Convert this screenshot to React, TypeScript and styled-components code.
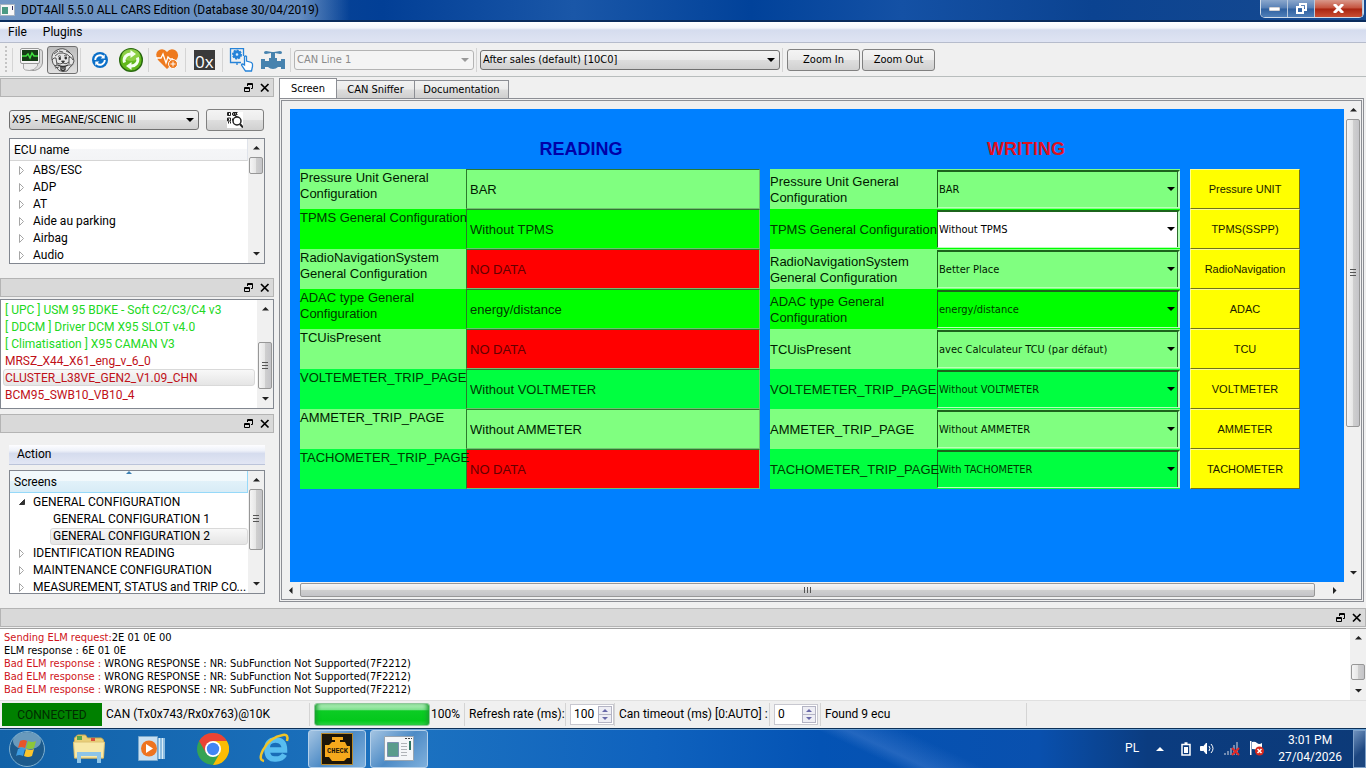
import type { ReactNode } from 'react'
import styled, { createGlobalStyle, css } from 'styled-components'

const uiFont = 'Roboto, "Noto Sans", sans-serif'
const smallFont = '"DejaVu Sans Condensed", "DejaVu Sans", sans-serif'
const formFont = '"Liberation Sans", Arial, sans-serif'

const GlobalStyle = createGlobalStyle`
  *, *::before, *::after {
    box-sizing: border-box;
  }

  body {
    margin: 0;
    background: #fff;
    color: #000;
    font: 12px/17px ${uiFont};
  }

  button, input, select {
    margin: 0;
    padding: 0;
    color: inherit;
    font: inherit;
  }

  ul {
    margin: 0;
    padding: 0;
    list-style: none;
  }

  svg {
    display: block;
    flex: none;
  }
`

const Desktop = styled.div`
  display: flex;
  flex-direction: column;
  min-height: 100vh;
  margin-right: 2px;
  background: #f0f0f0;
`

/* ---------- window frame ---------- */

const TitleBar = styled.header`
  display: flex;
  align-items: center;
  height: 22px;
  border-bottom: 2px solid #0a2c5c;
  background:
    linear-gradient(90deg, rgba(150, 180, 215, 0.7), rgba(150, 180, 215, 0.65) 300px, transparent 350px),
    linear-gradient(90deg, #1c5398, #023f96 28%, #1a57a8 42%, #01429a 55%, #1451a5 66%, #0b4391 80%, #174a90);
`

const WindowTitle = styled.h1`
  flex: 1;
  margin: 0 0 0 6px;
  font-size: 12px;
  font-weight: 400;
`

const WindowControls = styled.div`
  display: flex;
  align-self: flex-start;
  height: 18px;
  margin-right: 2px;
  overflow: hidden;
  border: 1px solid #cfdbe9;
  border-top: 0;
  border-radius: 0 0 5px 5px;
`

const WindowButton = styled.button<{ $close?: boolean }>`
  display: grid;
  place-items: center;
  width: ${({ $close }) => ($close ? 48 : 27)}px;
  border: 0;
  border-right: 1px solid #b9c9dd;
  background: ${({ $close }) =>
    $close
      ? 'linear-gradient(#d9988a, #c4513c 48%, #a82410 52%, #c94e33)'
      : 'linear-gradient(#8ba7cc, #557eb4 48%, #2e5f9f 52%, #4f7fb9)'};
`

const MenuBar = styled.nav`
  display: flex;
  gap: 16px;
  height: 21px;
  padding: 1px 8px 0;
  border-bottom: 1px solid #b6bccc;
  background: linear-gradient(#fff, #f4f6fb 30%, #d5dcee 40%, #dfe4f3);
`

const MenuItem = styled.button`
  border: 0;
  background: none;
`

const Toolbar = styled.div`
  display: flex;
  align-items: center;
  height: 34px;
  padding-left: 5px;
  border-bottom: 1px solid #b8bdbd;
`

const Grip = styled.div`
  width: 2px;
  height: 28px;
  margin-right: 3px;
  background: repeating-linear-gradient(#c4c4c4 0 2px, transparent 2px 4px);
`

const Separator = styled.div`
  width: 1px;
  height: 24px;
  margin: 0 3px 0 2px;
  background: #d4d4d4;
`

const ToolButton = styled.button<{ $pressed?: boolean }>`
  display: grid;
  place-items: center;
  width: 31px;
  height: 28px;
  border: 1px solid transparent;
  border-radius: 3px;
  background: none;
  ${({ $pressed }) =>
    $pressed &&
    css`
      border-color: #707070;
      background: linear-gradient(#bcbcbc, #e0e0e0);
    `}
`

const PushButton = styled.button<{ $width: number }>`
  display: grid;
  place-items: center;
  width: ${({ $width }) => $width}px;
  height: 22px;
  border: 1px solid #808080;
  border-radius: 3px;
  background: linear-gradient(#f4f4f4, #ececec 48%, #dedede 52%, #d0d0d0);
  font: 11px/16px ${smallFont};
`

const ZoomButtons = styled.div`
  display: flex;
  gap: 2px;
  margin-left: 1px;
`

/* ---------- combo boxes ---------- */

const ComboFrame = styled.div<{ $width: number }>`
  display: grid;
  align-items: center;
  width: ${({ $width }) => $width}px;

  > * {
    grid-area: 1 / 1;
  }

  > svg {
    justify-self: end;
    margin-right: 5px;
    pointer-events: none;
  }
`

const ComboSelect = styled.select`
  appearance: none;
  width: 100%;
  height: 20px;
  padding: 0 2px;
  border: 1px solid #707070;
  border-radius: 3px;
  background: linear-gradient(#f3f3f3, #ebebeb 48%, #dddddd 52%, #cfcfcf);
  font: 11px/16px ${smallFont};

  &:disabled {
    border-color: #b4b4b4;
    background: #f4f4f4;
    color: #8a8a8a;
    opacity: 1;
  }
`

/* ---------- workspace ---------- */

const Workspace = styled.main`
  display: flex;
  flex: 1;
  gap: 5px;
  padding: 1px 2px 6px 0;
`

const Sidebar = styled.aside`
  display: flex;
  flex-direction: column;
  width: 274px;
`

const DockTitle = styled.div`
  display: flex;
  align-items: center;
  justify-content: flex-end;
  gap: 6px;
  height: 19px;
  padding-right: 3px;
  border: 1px solid #b4b4b4;
  background: #d9d9d9;
`

const DockButton = styled.button`
  display: grid;
  place-items: center;
  width: 10px;
  height: 12px;
  border: 0;
  background: none;
`

const DockBody = styled.div<{ $last?: boolean }>`
  padding: 12px 9px ${({ $last }) => ($last ? 0 : 14)}px;
`

const ProjectRow = styled.div`
  display: flex;
  align-items: center;
  gap: 7px;
  margin-bottom: 7px;
`

const ListFrame = styled.div<{ $height: number }>`
  display: flex;
  height: ${({ $height }) => $height}px;
  overflow: hidden;
  border: 1px solid #828790;
  background: #fff;
`

const EcuFrame = styled(ListFrame)`
  margin: 2px 0 5px;
`

const ListContent = styled.div`
  flex: 1;
  min-width: 0;
`

const ListHeader = styled.div<{ $sorted?: boolean }>`
  display: flex;
  flex-direction: column;
  justify-content: flex-end;
  height: 22px;
  margin-bottom: 1px;
  padding: 0 4px 1px;
  border-right: 1px solid #dfe3ea;
  border-bottom: 1px solid #d5d5d5;
  background: linear-gradient(#fff 45%, #f5f6f8 50%, #f3f4f6);
  ${({ $sorted }) =>
    $sorted &&
    css`
      border-color: #96d9f9;
      background: linear-gradient(#f2f9fc 45%, #e1f1f9 50%, #d8ecf6);

      > svg {
        align-self: center;
      }
    `}
`

const TreeItem = styled.li<{ $level?: number; $selected?: boolean }>`
  display: flex;
  align-items: center;
  height: 17px;
  margin-left: ${({ $level = 0 }) => ($level ? 40 : 0)}px;
  padding-left: ${({ $level = 0 }) => ($level ? 2 : 7)}px;
  gap: 7px;
  border: 1px solid ${({ $selected }) => ($selected ? '#d9d9d9' : 'transparent')};
  border-radius: 3px;
  background: ${({ $selected }) => ($selected ? 'linear-gradient(#f8f8f8, #e5e5e5)' : 'none')};
  line-height: 17px;
  white-space: nowrap;
`

const EcuList = styled.ul`
  flex: 1;
  padding: 1px 2px;
`

const EcuItem = styled.li<{ $ok?: boolean; $selected?: boolean }>`
  height: 17px;
  padding-left: 1px;
  border: 1px solid ${({ $selected }) => ($selected ? '#d9d9d9' : 'transparent')};
  border-radius: 3px;
  background: ${({ $selected }) => ($selected ? 'linear-gradient(#f8f8f8, #e5e5e5)' : 'none')};
  color: ${({ $ok }) => ($ok ? '#22d822' : '#c01018')};
  line-height: 17px;
  white-space: nowrap;
`

const ActionBar = styled.div`
  height: 20px;
  margin-bottom: 5px;
  padding: 1px 0 0 8px;
  border-bottom: 1px solid #bcc4da;
  background: linear-gradient(#fdfdff, #eef1f9 30%, #d5dcee 45%, #e2e6f4);
`

/* ---------- scroll bars ---------- */

const ScrollTrack = styled.div<{ $horizontal?: boolean }>`
  display: flex;
  flex: none;
  flex-direction: ${({ $horizontal }) => ($horizontal ? 'row' : 'column')};
  align-items: center;
  ${({ $horizontal }) => ($horizontal ? 'height' : 'width')}: 16px;
  background: #f0f0f0;
`

const ScrollArrow = styled.button<{ $horizontal?: boolean }>`
  display: grid;
  flex: none;
  place-items: center;
  width: ${({ $horizontal }) => ($horizontal ? 18 : 16)}px;
  height: ${({ $horizontal }) => ($horizontal ? 16 : 18)}px;
  border: 0;
  background: none;
`

const ScrollSpace = styled.div<{ $grow: number }>`
  flex: ${({ $grow }) => $grow} 1 0;
`

const ScrollThumb = styled.div<{ $grow: number; $horizontal?: boolean }>`
  display: grid;
  flex: ${({ $grow }) => $grow} 1 0;
  place-items: center;
  align-self: stretch;
  margin: ${({ $horizontal }) => ($horizontal ? '1px 0' : '0 1px')};
  border: 1px solid #979797;
  border-radius: 2px;
  background: linear-gradient(${({ $horizontal }) => ($horizontal ? '180deg' : '90deg')}, #f5f5f5, #e6e6e6 48%, #cfcfcf 52%, #c4c4c8);
`

const HorizontalBar = styled.div`
  display: grid;
  padding: 0 17px 1px 0;
`

/* ---------- tabs and form canvas ---------- */

const TabArea = styled.section`
  display: flex;
  flex: 1;
  flex-direction: column;
  min-width: 0;
`

const TabStrip = styled.div`
  display: flex;
  align-items: flex-end;
  height: 20px;
`

const Tab = styled.button<{ $active?: boolean; $width: number }>`
  width: ${({ $width }) => $width}px;
  height: ${({ $active }) => ($active ? 20 : 18)}px;
  border: 1px solid #8c8e94;
  border-bottom: 0;
  background: ${({ $active }) => ($active ? '#fff' : 'linear-gradient(#f2f2f2, #ebebeb 48%, #dddddd 52%, #cfcfcf)')};
  font: 11px/16px ${smallFont};

  & + & {
    border-left: 0;
  }
`

const TabPane = styled.div`
  display: flex;
  flex: 1;
  flex-direction: column;
  border: 3px double #8c8e94;
`

const PaneRow = styled.div`
  display: flex;
  flex: 1;
  min-height: 0;
`

const Viewport = styled.div`
  flex: 1;
  min-width: 0;
  padding: 8px 1px 0 8px;
  overflow: hidden;
`

const Canvas = styled.form`
  display: grid;
  grid-template-columns: 460px 410px 110px;
  grid-template-rows: 40px auto;
  column-gap: 10px;
  align-content: start;
  height: 100%;
  padding: 20px 0 0 10px;
  background: #0080ff;
  font: 13px/16px ${formFont};
`

const Heading = styled.h2<{ $color: string }>`
  margin: 0;
  padding-left: 102px;
  color: ${({ $color }) => $color};
  font-size: 18px;
  font-weight: 700;
  line-height: 40px;
  text-align: center;
`

const HeadingSpacer = styled.div``

const FieldRow = styled.div<{ $shade: string }>`
  display: flex;
  height: 40px;
  background: ${({ $shade }) => $shade};
  color: ${({ $shade }) => ($shade === '#80ff80' ? '#001a00' : '#003800')};
`

const FieldLabel = styled.label<{ $middle?: boolean }>`
  z-index: 1;
  display: flex;
  align-items: ${({ $middle }) => ($middle ? 'center' : 'flex-start')};
  width: ${({ $middle }) => ($middle ? 167 : 166)}px;
  padding-top: ${({ $middle }) => ($middle ? 2 : 1)}px;
  white-space: pre;
`

const FieldValue = styled.input<{ $missing: boolean }>`
  flex: 1;
  min-width: 0;
  padding: 1px 3px 0;
  border: 1px solid;
  border-color: #2c7a2c #70c070 #70c070 #2c7a2c;
  background: ${({ $missing }) => ($missing ? '#f00' : 'transparent')};
  color: ${({ $missing }) => ($missing ? '#640000' : 'inherit')};
`

const FormSelect = styled.select<{ $blank?: boolean }>`
  appearance: none;
  width: 100%;
  height: 38px;
  padding: 0 1px;
  border: solid;
  border-width: 2px 2px 1px 1px;
  border-color: #1c641c #b8ffb8 #b8ffb8 #1c641c;
  border-radius: 0;
  background: ${({ $blank }) => ($blank ? '#fff' : 'transparent')};
  box-shadow: inset -1px 0 #2c6c2c;
  color: ${({ $blank }) => ($blank ? '#000' : 'inherit')};
  font: 11px/16px ${smallFont};
`

const SendButton = styled.button`
  height: 40px;
  border: 1px solid;
  border-color: #ffff90 #70701a #70701a #ffff90;
  background: #ff0;
  color: #1a1a00;
  font: 11px/16px ${formFont};
`

const ButtonColumn = styled.div`
  display: grid;
`

/* ---------- log, status bar ---------- */

const LogFrame = styled.div`
  display: flex;
  height: 72px;
  margin-top: 1px;
  border-top: 1px solid #a0a0a0;
  background: #fff;
`

const LogText = styled.div`
  flex: 1;
  padding: 2px 4px;
  font: 11px/13px ${smallFont};
`

const LogTag = styled.span`
  color: #d01420;
`

const StatusBar = styled.footer`
  display: flex;
  align-items: center;
  height: 28px;
  padding-left: 2px;
  border-top: 1px solid #e0e0e0;
`

const Connected = styled.div`
  width: 100px;
  height: 23px;
  background: #008000;
  color: #002c00;
  line-height: 24px;
  text-align: center;
`

const StatusItem = styled.div<{ $width: number }>`
  display: flex;
  align-items: center;
  width: ${({ $width }) => $width}px;
  height: 23px;
  padding-left: 4px;
  border-right: 1px solid #d4d4d4;
  white-space: nowrap;
`

const Progress = styled.div`
  width: 116px;
  height: 23px;
  margin-right: 1px;
  border: 1px solid #8fc79a;
  border-radius: 3px;
  background: linear-gradient(#b8f0c0, #7ce08c 28%, #0ccc24 32%, #04c81c 80%, #30d848);
  box-shadow: inset 4px 0 4px -2px #1a9c30, inset -4px 0 4px -2px #1a9c30;
`

const SpinBox = styled.div`
  display: flex;
  align-items: center;
  width: 44px;
  height: 21px;
  padding: 1px;
  border: 1px solid #c8c8d0;
  background: #fff;
`

const SpinInput = styled.input`
  appearance: textfield;
  flex: 1;
  min-width: 0;
  padding-left: 2px;
  border: 0;
  background: none;

  &::-webkit-inner-spin-button {
    appearance: none;
  }
`

const SpinArrows = styled.div`
  display: grid;
  width: 14px;
  border: 1px solid #b4b4c4;
`

const SpinArrow = styled.button`
  display: grid;
  place-items: center;
  height: 7px;
  border: 0;
  background: #eeeef4;

  & + & {
    border-top: 1px solid #b4b4c4;
    height: 8px;
  }
`

/* ---------- taskbar ---------- */

const Taskbar = styled.footer`
  display: flex;
  align-items: center;
  height: 40px;
  padding-left: 8px;
  border-top: 1px solid #0c3158;
  box-shadow: inset 0 1px #6ba2d6;
  background:
    linear-gradient(25deg, transparent 62%, rgba(90, 140, 215, 0.35) 64%, transparent 68%),
    linear-gradient(90deg, #1262a8, #1c72c0 30%, #0f62be 48%, #0453b4 60%, #0950ae 76%, #0b3c80 84%, #0c3a78);
`

const TaskButton = styled.button<{ $open?: boolean }>`
  display: grid;
  place-items: center;
  width: ${({ $open }) => ($open ? 58 : 62)}px;
  height: 38px;
  border: 1px solid transparent;
  border-radius: 3px;
  background: none;
  ${({ $open }) =>
    $open &&
    css`
      margin-left: 4px;
      border-color: #b4d0ea;
      background: linear-gradient(135deg, #a4c4e2, #4d8bc6 50%, #7fb0dc);
    `}
`

const StartButton = styled.button`
  width: 38px;
  height: 38px;
  margin-right: 12px;
  border: 0;
  background: none;
`

const TaskGroup = styled.div`
  display: flex;
  margin-left: -2px;
`

const Tray = styled.div`
  display: flex;
  align-items: center;
  gap: 9px;
  margin-left: auto;
  color: #fff;
`

const TrayMore = styled.button`
  display: grid;
  place-items: center;
  width: 24px;
  height: 24px;
  border: 0;
  background: none;
`

const Clock = styled.time`
  margin: 0 2px 0 4px;
  text-align: center;
`

const ShowDesktop = styled.button`
  width: 13px;
  height: 38px;
  border: 1px solid #7ea0c8;
  background: linear-gradient(135deg, #6e90bc, #1c4680 60%);
`

/* ---------- data ---------- */

const ecuNames = ['ABS/ESC', 'ADP', 'AT', 'Aide au parking', 'Airbag', 'Audio']

const foundEcus = [
  { name: '[ UPC ] USM 95 BDKE - Soft C2/C3/C4 v3', ok: true },
  { name: '[ DDCM ] Driver DCM X95 SLOT v4.0', ok: true },
  { name: '[ Climatisation ] X95 CAMAN V3', ok: true },
  { name: 'MRSZ_X44_X61_eng_v_6_0' },
  { name: 'CLUSTER_L38VE_GEN2_V1.09_CHN', selected: true },
  { name: 'BCM95_SWB10_VB10_4' },
]

const fields = [
  { label: 'Pressure Unit General\nConfiguration', shade: '#80ff80', read: 'BAR', write: 'BAR', send: 'Pressure UNIT' },
  { label: 'TPMS General Configuration', shade: '#00ff00', read: 'Without TPMS', write: 'Without TPMS', send: 'TPMS(SSPP)', blank: true },
  { label: 'RadioNavigationSystem\nGeneral Configuration', shade: '#80ff80', read: 'NO DATA', write: 'Better Place', send: 'RadioNavigation' },
  { label: 'ADAC type General\nConfiguration', shade: '#00ff00', read: 'energy/distance', write: 'energy/distance', send: 'ADAC' },
  { label: 'TCUisPresent', shade: '#80ff80', read: 'NO DATA', write: 'avec Calculateur TCU (par défaut)', send: 'TCU' },
  { label: 'VOLTEMETER_TRIP_PAGE', shade: '#00ff40', read: 'Without VOLTMETER', write: 'Without VOLTMETER', send: 'VOLTMETER' },
  { label: 'AMMETER_TRIP_PAGE', shade: '#80ff80', read: 'Without AMMETER', write: 'Without AMMETER', send: 'AMMETER' },
  { label: 'TACHOMETER_TRIP_PAGE', shade: '#00ff40', read: 'NO DATA', write: 'With TACHOMETER', send: 'TACHOMETER' },
]

const log = [
  { tag: 'Sending ELM request:', text: '2E 01 0E 00' },
  { tag: '', text: 'ELM response : 6E 01 0E' },
  { tag: 'Bad ELM response : ', text: 'WRONG RESPONSE : NR: SubFunction Not Supported(7F2212)' },
  { tag: 'Bad ELM response : ', text: 'WRONG RESPONSE : NR: SubFunction Not Supported(7F2212)' },
  { tag: 'Bad ELM response : ', text: 'WRONG RESPONSE : NR: SubFunction Not Supported(7F2212)' },
]

/* ---------- small parts ---------- */

const arrowPaths = {
  up: 'M0 4 L4 0 L8 4Z',
  down: 'M0 0 H8 L4 4Z',
  left: 'M4 0 V8 L0 4Z',
  right: 'M0 0 L4 4 L0 8Z',
}

const Arrow = ({ dir, color = '#222', size = 8 }: { dir: keyof typeof arrowPaths; color?: string; size?: number }) => {
  const flat = dir === 'up' || dir === 'down'
  return (
    <svg
      width={flat ? size : size / 2}
      height={flat ? size / 2 : size}
      viewBox={flat ? '0 0 8 4' : '0 0 4 8'}
      fill={color}
    >
      <path d={arrowPaths[dir]} />
    </svg>
  )
}

interface ScrollBarProps {
  before: number
  thumb: number
  after: number
  horizontal?: boolean
  grip?: boolean
}

const ScrollBar = ({ before, thumb, after, horizontal, grip }: ScrollBarProps) => (
  <ScrollTrack $horizontal={horizontal}>
    <ScrollArrow type="button" $horizontal={horizontal} aria-label="Scroll back">
      <Arrow dir={horizontal ? 'left' : 'up'} size={7} />
    </ScrollArrow>
    <ScrollSpace $grow={before} />
    <ScrollThumb $grow={thumb} $horizontal={horizontal}>
      {grip && (
        <svg width="8" height="8" stroke="#555">
          <path d={horizontal ? 'M.5 1v6M3.5 1v6M6.5 1v6' : 'M1 .5h6M1 3.5h6M1 6.5h6'} />
        </svg>
      )}
    </ScrollThumb>
    <ScrollSpace $grow={after} />
    <ScrollArrow type="button" $horizontal={horizontal} aria-label="Scroll forward">
      <Arrow dir={horizontal ? 'right' : 'down'} size={7} />
    </ScrollArrow>
  </ScrollTrack>
)

const Combo = ({ label, value, width, disabled }: { label: string; value: string; width: number; disabled?: boolean }) => (
  <ComboFrame $width={width}>
    <ComboSelect aria-label={label} disabled={disabled}>
      <option>{value}</option>
    </ComboSelect>
    <Arrow dir="down" color={disabled ? '#999' : '#000'} />
  </ComboFrame>
)

const DockHeader = () => (
  <DockTitle>
    <DockButton aria-label="Float">
      <svg width="10" height="10" fill="none" stroke="#000">
        <path d="M3.5 3V.5h5v5H7M3 1.5h6" />
        <path d="M.5 4.5h5v4h-5zM0 5.5h6" />
      </svg>
    </DockButton>
    <DockButton aria-label="Close">
      <svg width="10" height="10" stroke="#000" strokeWidth="1.700">
        <path d="M1 1l7.500 7.500M8.500 1L1 8.500" />
      </svg>
    </DockButton>
  </DockTitle>
)

const TreeMark = ({ open }: { open?: boolean }) => (
  <svg width="8" height="9" fill={open ? '#333' : '#fff'} stroke={open ? '#333' : '#a6a6a6'}>
    <path d={open ? 'M6.5 1.5v5h-5z' : 'M1.5 .5v8l4-4z'} />
  </svg>
)

const TreeRow = ({ children, open }: { children: ReactNode; open?: boolean }) => (
  <TreeItem>
    <TreeMark open={open} />
    {children}
  </TreeItem>
)

const Spin = ({ id, value }: { id: string; value: number }) => (
  <SpinBox>
    <SpinInput id={id} type="number" defaultValue={value} />
    <SpinArrows>
      <SpinArrow aria-label="Increase">
        <Arrow dir="up" color="#6868a8" size={6} />
      </SpinArrow>
      <SpinArrow aria-label="Decrease">
        <Arrow dir="down" color="#6868a8" size={6} />
      </SpinArrow>
    </SpinArrows>
  </SpinBox>
)

/* ---------- icons ---------- */

const AppIcon = () => (
  <svg width="15" height="12">
    <path fill="#f8f8f8" stroke="#a8b4c0" d="M.5 .5h14v11H.5z" />
    <path fill="#4a9a84" d="M2 3h6v7H2z" />
    <path fill="#336" d="M12 2h1v4h-1z" />
  </svg>
)

const MonitorIcon = () => (
  <svg width="24" height="24">
    <path fill="#dcdcdc" stroke="#999" d="M19 1.500h1q2.500 0 2.500 2.500v11q-1 6-8 7.500H9l8-5z" />
    <path fill="#ececec" stroke="#a8a8a8" d="M3.500 15h14v3q-3 4.500-8 4.500-5 0-6-2z" />
    <rect x=".5" y=".5" width="19" height="15" rx="1.500" fill="#f4f4f4" stroke="#999" />
    <path fill="#153c15" d="M2 2h16v11H2z" />
    <path stroke="#40e040" strokeWidth="1.500" fill="none" d="M2 8h4l2-2 2 4 2-5 2 3h4" />
  </svg>
)

const DogIcon = () => (
  <svg width="25" height="24" viewBox="0 0 25 24" fill="none" stroke="#333" strokeWidth=".8">
    <path fill="#e6e6e6" d="M7 2q6-3 11 1 6 4 6 10-1 5-4 6l-3 4-4 .5-4-1-3-4q-4-2-4-7Q1 5 7 2z" />
    <path d="M5 8q3-4 8-3t7 4M2 12q2-3 4-2l1 7M23 12q-2-4-4-3v7M4 6l4-3M9 3l4 1M20 5l-4-2" />
    <path fill="#333" d="M9 9.500h1.500v2H9zM15 9h1.500v2H15zM11.500 13h3l-1.500 2z" />
    <path d="M8 8.500q1.500-1.500 3 0M14 8q1.500-1.500 3 0M7 15q3 2 6 0 3 2 6-1" />
    <path strokeWidth="1.400" d="M8 17q5 3 10 0M11 18v3.500q2 2 4 0V18M13 18v3" />
    <path d="M4 18l4-1M22 17l-4 0M5 20l4-1" />
  </svg>
)

const SyncIcon = () => (
  <svg width="16" height="16">
    <circle cx="8" cy="8" r="8" fill="#0b6fc8" />
    <g fill="none" stroke="#fff" strokeWidth="1.800">
      <path d="M3.200 8a4.800 4.800 0 0 1 8-3.500M12.800 8a4.800 4.800 0 0 1-8 3.500" />
    </g>
    <path fill="#fff" d="M12.700 2.500v4h-4zM3.300 13.500v-4h4z" />
  </svg>
)

const RefreshIcon = () => (
  <svg width="24" height="24">
    <circle cx="12" cy="12" r="11.300" fill="#62b81c" stroke="#28690e" strokeWidth="1.400" />
    <ellipse cx="12" cy="7" rx="9" ry="6" fill="#a8e060" opacity=".6" />
    <g fill="none" stroke="#f4fff0" strokeWidth="3">
      <path d="M5.500 14.500a6.500 6.500 0 0 1 7-8.500M18.500 9.500a6.500 6.500 0 0 1-7 8.500" />
    </g>
    <path fill="#f4fff0" d="M11.500 2l5.500 4-5.500 4zM12.500 22l-5.500-4 5.500-4z" />
  </svg>
)

const HeartIcon = () => (
  <svg width="23" height="21">
    <path fill="#ee7a1e" d="M11 20L2 11Q-2 4 3 1q5-2 8 2 3-4 8-2 5 3 2 9z" />
    <path fill="none" stroke="#fff" strokeWidth="1.300" d="M0 9h5l2-4 3 9 2-6 2 2h3" />
    <circle cx="17" cy="15" r="4.500" fill="#ee7a1e" stroke="#fff" />
    <path stroke="#fff" d="M17 12.500v5M14.500 15h5" />
  </svg>
)

const HexIcon = () => (
  <svg width="21" height="20">
    <path fill="#3a3a3a" d="M0 0h21v20H0z" />
    <text x="1" y="18" fill="#fff" fontFamily="Open Sans" fontSize="17">0x</text>
  </svg>
)

const GearHandIcon = () => (
  <svg width="25" height="24" fill="none" stroke="#2683d8" strokeWidth="1.300">
    <path d="M12 14.500H1.500v-14h13V8" />
    <circle cx="8" cy="6.500" r="4" fill="#2683d8" strokeDasharray="2 1" strokeWidth="2" />
    <circle cx="8" cy="6.500" r="2" fill="#d8ecff" />
    <path d="M8 14v3" />
    <path fill="#fff" d="M15.500 15V8.500q1-1 2 0V13l5 1.500q1.500 1 1 4l-1 4.500h-6l-4-6q0-2 3 0z" />
  </svg>
)

const ValveIcon = () => (
  <svg width="24" height="18" fill="#4682ae">
    <path d="M3 1.500q0-1.500 2-1.500l6 1h2l6-1q2 0 2 1.500T19 3l-5-1v5h2v3h4V8h4v10h-4v-2h-3q-2 2-5 2t-5-2H4v2H0V8h4v2h4V7h2V2L5 3q-2 0-2-1.500z" />
  </svg>
)

const ScanIcon = () => (
  <svg width="16" height="16" fill="none" stroke="#222">
    <path fill="#fff" stroke="none" d="M0 0h16v16H0z" />
    <path d="M.5 .5h3v3h-3zM.5 6h3v3h-3zM6 .5h3v3H6z" />
    <path strokeDasharray="1 1" strokeWidth="2" d="M1 2h10M1 7.500h5M1 10.500h3M9.500 5V0" />
    <circle cx="10" cy="9" r="4" fill="#fff" strokeWidth="1.500" />
    <path strokeWidth="2" d="M13 12l3 3.500" />
  </svg>
)

const StartOrb = () => (
  <svg width="38" height="38">
    <circle cx="19" cy="19" r="17.500" fill="#1c5a8c" stroke="#7fb0d0" />
    <ellipse cx="19" cy="11" rx="14" ry="9" fill="#a9cfe4" opacity=".55" />
    <path fill="#e8552a" d="M12 11q4-2 7 0l-2 7q-4-2-7 0z" />
    <path fill="#8cc63a" d="M20 11q4 2 8 0l-2 7q-4 2-8 0z" />
    <path fill="#3c9ce0" d="M10 19q4-2 7 0l-2 7q-4-2-7 0z" />
    <path fill="#fbc52c" d="M18 19q4 2 8 0l-2 7q-4 2-8 0z" />
  </svg>
)

const FolderIcon = () => (
  <svg width="34" height="30">
    <path fill="#e9cf78" stroke="#c9a94c" d="M2.500 4l3-3h8l2 3h14l2 2v18h-29z" />
    <path fill="#58a64c" d="M5 2h5v4H5z" />
    <path fill="#d8503c" d="M19 4h4v3h-4z" />
    <path fill="#f7e8a8" stroke="#dcc070" d="M1.500 8h31l-1 16h-29z" />
    <path fill="none" stroke="#8cc4e8" strokeWidth="4" d="M7 29V20h20v9" />
  </svg>
)

const PlayerIcon = () => (
  <svg width="27" height="25">
    <path fill="#8cbce0" d="M18 2h9v21h-9z" />
    <path stroke="#dbeef8" d="M21.500 2v21M24.500 2v21" />
    <path fill="#c8e0f2" stroke="#7aa8cc" d="M.5 .5h19v24H.5z" />
    <circle cx="11" cy="12.500" r="8" fill="#ee7420" />
    <path fill="#fff" d="M8 8l7 4.500L8 17z" />
  </svg>
)

const ChromeIcon = () => (
  <svg width="32" height="32" viewBox="0 0 32 32">
    <circle cx="16" cy="16" r="16" fill="#34a353" />
    <path fill="#ea4335" d="M2.140 8A16 16 0 0 1 29.860 8H16l-6.900 12z" />
    <path fill="#fbbc05" d="M29.860 8A16 16 0 0 1 16 32l6.900-12L16 8z" />
    <circle cx="16" cy="16" r="8" fill="#fff" />
    <circle cx="16" cy="16" r="6.200" fill="#4285f4" />
  </svg>
)

const ExplorerIcon = () => (
  <svg width="32" height="31" fill="none">
    <path stroke="#58bdf0" strokeWidth="5.500" d="M9 17h16.500q0-10-9-10T8 17t9 9q6 0 8.500-4.500" />
    <path stroke="#f0c428" strokeWidth="2.500" d="M5 28q-6-1-1-11Q11 4 24 2q6-1 4 6" />
  </svg>
)

const CheckIcon = () => (
  <svg width="32" height="32">
    <path fill="#1c1508" stroke="#b98a2c" d="M.5 .5h31v31H.5z" />
    <path fill="#f5a91c" d="M11 4h11v3h-3v2h5l2 4h3v12h-3l-3 3H11l-3-4H4V12h4l3-3h3V7h-3z" />
    <text x="6" y="20" fill="#1c1508" fontFamily="Liberation Mono" fontSize="7" fontWeight="700">CHECK</text>
  </svg>
)

const WindowIcon = () => (
  <svg width="30" height="25">
    <path fill="#f4f6f8" stroke="#98a4b0" d="M.5 .5h29v24H.5z" />
    <path fill="#5a9c8c" stroke="#7a90b0" d="M3.500 6.500h11v14h-11z" />
    <path stroke="#b0b4b8" d="M17 7.500h6M17 10.500h6M17 13.500h6M17 16.500h6M17 19.500h6" />
    <path fill="#2f7462" d="M25 5h2v9h-2z" />
    <path stroke="#444" d="M21 2.500h7" strokeDasharray="2 1" />
  </svg>
)

const TrayIcons = () => (
  <>
    <svg width="10" height="14" fill="none" stroke="#fff" strokeWidth="1.500">
      <path d="M1 2.500h8V13H1zM3.500 1h3" />
      <path fill="#fff" stroke="none" d="M3 5h4v6H3z" />
    </svg>
    <svg width="15" height="13" fill="none" stroke="#fff">
      <path fill="#fff" d="M.5 4.500h3l3-3.500v11l-3-3.500h-3z" />
      <path d="M9 4q2 2.500 0 5M11 2q4 4.500 0 9" />
    </svg>
    <svg width="16" height="14">
      <path fill="#718ab0" d="M0 11h2v2H0zM3 9h2v4H3zM6 6h2v7H6zM9 3h2v10H9zM12 0h2v13h-2z" />
      <path stroke="#e02828" strokeWidth="2" d="M8 6l7 7M15 6l-7 7" />
    </svg>
    <svg width="16" height="15">
      <path fill="#fff" d="M1 0h1.500v14H1zM3 1q3-1 5 1t5 0v7q-3 1-5 0T3 8z" />
      <circle cx="10.500" cy="10" r="4.500" fill="#d8281c" />
      <path stroke="#fff" strokeWidth="1.500" d="M8.500 8l4 4M12.500 8l-4 4" />
    </svg>
  </>
)

const App = () => (
  <Desktop>
    <GlobalStyle />
    <TitleBar>
      <AppIcon />
      <WindowTitle>DDT4All 5.5.0 ALL CARS Edition (Database 30/04/2019)</WindowTitle>
      <WindowControls>
        <WindowButton aria-label="Minimise">
          <svg width="11" height="4"><path fill="#fff" stroke="#445" strokeWidth=".5" d="M0 0h11v4H0z" /></svg>
        </WindowButton>
        <WindowButton aria-label="Restore">
          <svg width="11" height="11" fill="none" stroke="#fff" strokeWidth="2">
            <path d="M4 3V1h6v6H8" />
            <path d="M1 4h6v6H1z" />
          </svg>
        </WindowButton>
        <WindowButton $close aria-label="Close">
          <svg width="11" height="9" stroke="#fff" strokeWidth="3"><path d="M1 0l9 9M10 0L1 9" /></svg>
        </WindowButton>
      </WindowControls>
    </TitleBar>
    <MenuBar>
      <MenuItem>File</MenuItem>
      <MenuItem>Plugins</MenuItem>
    </MenuBar>
    <Toolbar>
      <Grip />
      <Separator />
      <ToolButton aria-label="Connection"><MonitorIcon /></ToolButton>
      <ToolButton $pressed aria-label="Expert mode"><DogIcon /></ToolButton>
      <Separator />
      <ToolButton aria-label="Auto refresh"><SyncIcon /></ToolButton>
      <ToolButton aria-label="Refresh"><RefreshIcon /></ToolButton>
      <Separator />
      <ToolButton aria-label="Diagnostic"><HeartIcon /></ToolButton>
      <Separator />
      <ToolButton aria-label="Hex input"><HexIcon /></ToolButton>
      <Separator />
      <ToolButton aria-label="Commands"><GearHandIcon /></ToolButton>
      <ToolButton aria-label="Flow control"><ValveIcon /></ToolButton>
      <Separator />
      <Combo label="CAN line" value="CAN Line 1" width={180} disabled />
      <Separator />
      <Combo label="Session" value="After sales (default) [10C0]" width={300} />
      <Separator />
      <ZoomButtons>
        <PushButton $width={73}>Zoom In</PushButton>
        <PushButton $width={73}>Zoom Out</PushButton>
      </ZoomButtons>
    </Toolbar>

    <Workspace>
      <Sidebar>
        <DockHeader />
        <DockBody>
          <ProjectRow>
            <Combo label="Vehicle" value="X95 - MEGANE/SCENIC III" width={190} />
            <PushButton $width={58} aria-label="Scan"><ScanIcon /></PushButton>
          </ProjectRow>
          <ListFrame $height={126}>
            <ListContent>
              <ListHeader>ECU name</ListHeader>
              <ul>
                {ecuNames.map((name) => (
                  <TreeRow key={name}>{name}</TreeRow>
                ))}
              </ul>
            </ListContent>
            <ScrollBar before={0} thumb={16} after={73} />
          </ListFrame>
        </DockBody>
        <DockHeader />
        <EcuFrame $height={110}>
          <EcuList>
            {foundEcus.map(({ name, ok, selected }) => (
              <EcuItem key={name} $ok={ok} $selected={selected}>{name}</EcuItem>
            ))}
          </EcuList>
          <ScrollBar before={25} thumb={46} after={1} grip />
        </EcuFrame>
        <DockHeader />
        <DockBody $last>
          <ActionBar>Action</ActionBar>
          <ListFrame $height={124}>
            <ListContent>
              <ListHeader $sorted>
                <Arrow dir="up" color="#3c7fb1" size={6} />
                Screens
              </ListHeader>
              <ul>
                <TreeRow open>GENERAL CONFIGURATION</TreeRow>
                <TreeItem $level={1}>GENERAL CONFIGURATION 1</TreeItem>
                <TreeItem $level={1} $selected>GENERAL CONFIGURATION 2</TreeItem>
                <TreeRow>IDENTIFICATION READING</TreeRow>
                <TreeRow>MAINTENANCE CONFIGURATION</TreeRow>
                <TreeRow>MEASUREMENT, STATUS and TRIP CO...</TreeRow>
              </ul>
            </ListContent>
            <ScrollBar before={0} thumb={60} after={26} grip />
          </ListFrame>
        </DockBody>
      </Sidebar>

      <TabArea>
        <TabStrip>
          <Tab $active $width={58}>Screen</Tab>
          <Tab $width={78}>CAN Sniffer</Tab>
          <Tab $width={94}>Documentation</Tab>
        </TabStrip>
        <TabPane>
          <PaneRow>
            <Viewport>
              <Canvas>
                <Heading $color="#0000a8">READING</Heading>
                <Heading $color="#e01020">WRITING</Heading>
                <HeadingSpacer />
                <div>
                  {fields.map(({ label, shade, read, send }) => (
                    <FieldRow key={send} $shade={shade}>
                      <FieldLabel htmlFor={`read-${send}`}>{label}</FieldLabel>
                      <FieldValue id={`read-${send}`} readOnly value={read} $missing={read === 'NO DATA'} />
                    </FieldRow>
                  ))}
                </div>
                <div>
                  {fields.map(({ label, shade, write, send, blank }) => (
                    <FieldRow key={send} $shade={shade}>
                      <FieldLabel $middle htmlFor={`write-${send}`}>{label}</FieldLabel>
                      <ComboFrame $width={243}>
                        <FormSelect id={`write-${send}`} $blank={blank}>
                          <option>{write}</option>
                        </FormSelect>
                        <Arrow dir="down" color="#000" />
                      </ComboFrame>
                    </FieldRow>
                  ))}
                </div>
                <ButtonColumn>
                  {fields.map(({ send }) => (
                    <SendButton key={send} type="button">{send}</SendButton>
                  ))}
                </ButtonColumn>
              </Canvas>
            </Viewport>
            <ScrollBar before={0} thumb={307} after={138} grip />
          </PaneRow>
          <HorizontalBar>
            <ScrollBar horizontal before={0} thumb={1014} after={11} grip />
          </HorizontalBar>
        </TabPane>
      </TabArea>
    </Workspace>

    <DockHeader />
    <LogFrame>
      <LogText>
        {log.map(({ tag, text }, index) => (
          <div key={index}>
            <LogTag>{tag}</LogTag>
            {text}
          </div>
        ))}
      </LogText>
      <ScrollBar before={18} thumb={16} after={2} />
    </LogFrame>
    <StatusBar>
      <Connected>CONNECTED</Connected>
      <StatusItem $width={208}>CAN (Tx0x743/Rx0x763)@10K</StatusItem>
      <StatusItem $width={155}>
        <Progress role="progressbar" aria-label="Scan progress" aria-valuenow={100} />
        100%
      </StatusItem>
      <StatusItem as="label" htmlFor="refresh" $width={101}>Refresh rate (ms):</StatusItem>
      <StatusItem $width={49}><Spin id="refresh" value={100} /></StatusItem>
      <StatusItem as="label" htmlFor="timeout" $width={155}>Can timeout (ms) [0:AUTO] :</StatusItem>
      <StatusItem $width={51}><Spin id="timeout" value={0} /></StatusItem>
      <StatusItem $width={206}>Found 9 ecu</StatusItem>
    </StatusBar>

    <Taskbar>
      <StartButton aria-label="Start"><StartOrb /></StartButton>
      <TaskButton aria-label="File Explorer"><FolderIcon /></TaskButton>
      <TaskButton aria-label="Media Player"><PlayerIcon /></TaskButton>
      <TaskButton aria-label="Chrome"><ChromeIcon /></TaskButton>
      <TaskButton aria-label="Internet Explorer"><ExplorerIcon /></TaskButton>
      <TaskGroup>
        <TaskButton $open aria-label="Check"><CheckIcon /></TaskButton>
        <TaskButton $open aria-label="DDT4All"><WindowIcon /></TaskButton>
      </TaskGroup>
      <Tray>
        <span>PL</span>
        <TrayMore aria-label="Show hidden icons"><Arrow dir="up" color="#fff" /></TrayMore>
        <TrayIcons />
        <Clock>
          3:01 PM
          <br />
          27/04/2026
        </Clock>
        <ShowDesktop aria-label="Show desktop" />
      </Tray>
    </Taskbar>
  </Desktop>
)

export default App
